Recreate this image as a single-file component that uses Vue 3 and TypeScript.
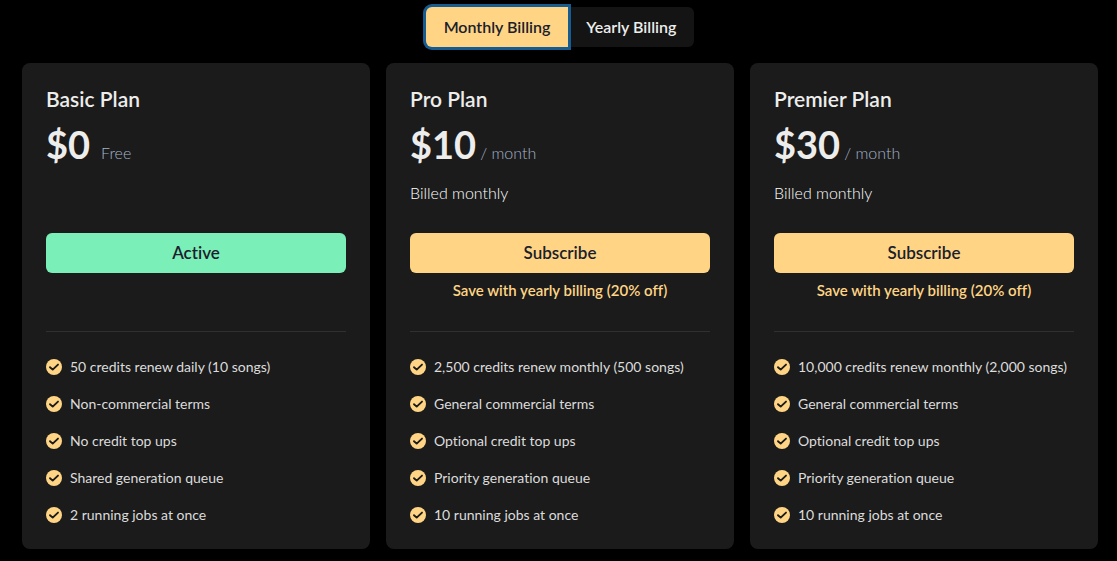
<script setup lang="ts">
import { ref } from 'vue'

interface Plan {
  name: string
  price: string
  unit: string
  free?: boolean
  billed: string
  action: string
  note: string
  features: string[]
}

const billing = ref<'monthly' | 'yearly'>('monthly')

const plans: Plan[] = [
  {
    name: 'Basic Plan',
    price: '$0',
    unit: 'Free',
    free: true,
    billed: '',
    action: 'Active',
    note: '',
    features: [
      '50 credits renew daily (10 songs)',
      'Non-commercial terms',
      'No credit top ups',
      'Shared generation queue',
      '2 running jobs at once',
    ],
  },
  {
    name: 'Pro Plan',
    price: '$10',
    unit: '/ month',
    billed: 'Billed monthly',
    action: 'Subscribe',
    note: 'Save with yearly billing (20% off)',
    features: [
      '2,500 credits renew monthly (500 songs)',
      'General commercial terms',
      'Optional credit top ups',
      'Priority generation queue',
      '10 running jobs at once',
    ],
  },
  {
    name: 'Premier Plan',
    price: '$30',
    unit: '/ month',
    billed: 'Billed monthly',
    action: 'Subscribe',
    note: 'Save with yearly billing (20% off)',
    features: [
      '10,000 credits renew monthly (2,000 songs)',
      'General commercial terms',
      'Optional credit top ups',
      'Priority generation queue',
      '10 running jobs at once',
    ],
  },
]
</script>

<template>
  <main class="pricing">
    <div class="toggle" role="group" aria-label="Billing period">
      <button
        type="button"
        class="period first"
        :class="{ selected: billing === 'monthly' }"
        :aria-pressed="billing === 'monthly'"
        @click="billing = 'monthly'"
      >
        Monthly Billing
      </button>
      <button
        type="button"
        class="period last"
        :class="{ selected: billing === 'yearly' }"
        :aria-pressed="billing === 'yearly'"
        @click="billing = 'yearly'"
      >
        Yearly Billing
      </button>
    </div>

    <div class="plans">
      <section v-for="plan in plans" :key="plan.name" class="card">
        <h2 class="name">{{ plan.name }}</h2>
        <p class="cost" :class="{ free: plan.free }">
          <span class="price">{{ plan.price }}</span>
          <span class="unit">{{ plan.unit }}</span>
        </p>
        <p class="billed">{{ plan.billed }}</p>
        <button type="button" class="action" :class="{ active: plan.free }">{{ plan.action }}</button>
        <p class="note">{{ plan.note }}</p>
        <ul class="features">
          <li v-for="feature in plan.features" :key="feature" class="feature">
            <svg class="check" viewBox="0 0 16 16" aria-hidden="true">
              <circle cx="8" cy="8" r="8" fill="#ffd585" />
              <path
                d="M4 8.2 6.7 10.6 12 5.6"
                fill="none"
                stroke="#1b1b1b"
                stroke-width="1.9"
                stroke-linecap="round"
                stroke-linejoin="round"
              />
            </svg>
            <span>{{ feature }}</span>
          </li>
        </ul>
      </section>
    </div>
  </main>
</template>

<style>
body {
  margin: 0;
  background: #000;
}
</style>

<style scoped>
.pricing {
  display: flex;
  flex-direction: column;
  gap: 16px;
  padding: 7px 19px 12px 22px;
  color: #ededec;
  font-family: Lato, 'Liberation Sans', sans-serif;
  font-size: 16px;
  font-weight: 300;
  font-variant-ligatures: none;
  line-height: 24px;
}

.toggle {
  display: flex;
  justify-content: center;
}

button {
  margin: 0;
  border: 0;
  font: inherit;
  font-weight: 600;
  font-variant-ligatures: none;
  cursor: pointer;
}

.period {
  height: 40px;
  padding: 0 18px;
  background: #141414;
  color: #ededec;
}

.period.first {
  border-radius: 6px 0 0 6px;
}

.period.last {
  border-radius: 0 6px 6px 0;
}

.period.selected {
  z-index: 1;
  background: #ffd585;
  color: #1a202c;
  box-shadow: 0 0 0 3px #175c91;
}

.plans {
  display: grid;
  grid-template-columns: repeat(3, minmax(0, 1fr));
  gap: 16px;
}

.card {
  padding: 24px;
  border-radius: 8px;
  background: #1b1b1b;
}

.name {
  margin: 0;
  font-size: 21px;
  line-height: 24px;
  font-weight: 600;
}

.cost {
  display: flex;
  align-items: baseline;
  gap: 4px;
  margin: 9px 0 13px;
}

.cost.free {
  gap: 11px;
}

.price {
  font-size: 38px;
  line-height: 48px;
  font-weight: 700;
}

.unit {
  color: #a3b3c9;
}

.billed {
  min-height: 24px;
  margin: 0 0 28px;
  color: #fff;
}

.action {
  display: block;
  width: 100%;
  height: 40px;
  border-radius: 6px;
  background: #ffd585;
  color: #1a202c;
  font-size: 17px;
}

.action.active {
  background: #7aefb8;
}

.note {
  min-height: 20px;
  margin: 7px 0 31px;
  color: #ffd585;
  font-size: 15px;
  line-height: 20px;
  font-weight: 600;
  text-align: center;
}

.features {
  display: flex;
  flex-direction: column;
  gap: 16px;
  margin: 0;
  padding: 24px 0 0;
  border-top: 1px solid #303030;
  list-style: none;
}

.feature {
  display: flex;
  align-items: center;
  gap: 8px;
  color: #dcdcdb;
  font-size: 14px;
  font-weight: 400;
  line-height: 21px;
}

.check {
  flex: none;
  width: 16px;
  height: 16px;
}
</style>
